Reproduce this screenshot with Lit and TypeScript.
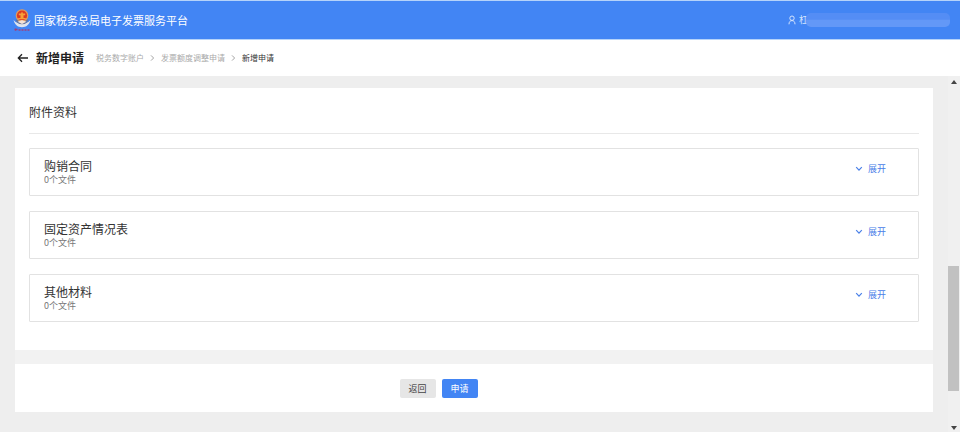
import { LitElement, html, css } from "lit";
import { customElement, property } from "lit/decorators.js";

const chevron = html`<svg viewBox="0 0 8 6" width="8" height="6" aria-hidden="true">
  <path d="M1.2 1.2 4 4.2 6.8 1.2" fill="none" stroke="currentColor" stroke-width="1.2" />
</svg>`;

const separator = html`<svg viewBox="0 0 5 8" width="5" height="8" aria-hidden="true">
  <path d="M1 1.4 3.6 4 1 6.6" fill="none" stroke="currentColor" stroke-width="0.9" />
</svg>`;

const emblem = html`<svg viewBox="0 0 18 24" width="18" height="24" aria-hidden="true">
  <path d="M.6 12c1 4.600 4 7.200 8.400 7.200s7.400-2.600 8.400-7.200c-2 2.500-4.900 3.800-8.400 3.800S2.600 14.500.6 12z" fill="#dfe4ee" />
  <path d="M2.500 11.500c.8 3.200 3 4.800 6.500 4.800s5.700-1.600 6.500-4.800z" fill="#66749c" />
  <circle cx="9" cy="7.500" r="6.300" fill="#e39a5a" />
  <circle cx="9" cy="7.500" r="5.100" fill="#dc3a22" />
  <path d="M9 3.500 10 5.500h2.200v1.800H10.500v2.700h2.300v1.300H5.200V10h2.300V7.300H5.800V5.500H8z" fill="#f6a13a" />
  <path d="M4.600 13.700 9 11.900l4.400 1.800-4.400 2.300z" fill="#f3e2d6" />
  <path d="M1.500 21.500h3M2.500 20.500v2.300M5.500 22h2M8.500 22h2M11.500 22h2M14.500 22h2" stroke="#a0407a" stroke-width="1.300" fill="none" />
</svg>`;

@customElement("attachment-card")
export class AttachmentCard extends LitElement {
  @property() name = "";
  @property({ type: Number }) count = 0;

  static styles = css`
    :host {
      display: flex;
      justify-content: space-between;
      align-items: flex-start;
      box-sizing: border-box;
      padding: 9px 32px 9px 14px;
      border: 1px solid #e2e2e2;
      border-radius: 1px;
    }
    .name {
      margin: 0;
      font-size: 12px;
      line-height: 16px;
      font-weight: 400;
      color: #333;
    }
    .count {
      margin: 0;
      font-size: 9px;
      line-height: 12px;
      color: #777;
    }
    .toggle {
      display: flex;
      align-items: center;
      gap: 5px;
      margin-top: 4px;
      padding: 0;
      border: 0;
      background: none;
      font: inherit;
      font-size: 9px;
      line-height: 14px;
      color: #4a80e8;
      cursor: pointer;
    }
  `;

  render() {
    return html`
      <div>
        <h3 class="name">${this.name}</h3>
        <p class="count">${this.count}个文件</p>
      </div>
      <button class="toggle" type="button" aria-expanded="false">${chevron}展开</button>
    `;
  }
}

@customElement("app-root")
export class AppRoot extends LitElement {
  static styles = css`
    :host {
      display: flex;
      flex-direction: column;
      min-height: 100vh;
      background: #eee;
      color: #333;
      font-family: "Noto Sans CJK SC", sans-serif;
    }
    .topbar {
      display: flex;
      align-items: center;
      box-sizing: border-box;
      height: 40px;
      padding: 0 10px 0 13px;
      border-top: 1px solid #b5d3fa;
      border-bottom: 1px solid #b5d3fa;
      background: #4285f4;
      color: #fff;
    }
    .brand {
      margin: 0 auto 0 3px;
      font-size: 11px;
      line-height: 16px;
      font-weight: 400;
    }
    .user {
      display: flex;
      align-items: center;
      gap: 3px;
      font-size: 9px;
      line-height: 14px;
      color: #d5e4fd;
    }
    .who {
      display: flex;
      align-items: center;
    }
    .mask {
      width: 144px;
      height: 14px;
      margin-left: -2px;
      border-radius: 5px;
      background: linear-gradient(#548df5 45%, #6398f7 50%);
    }
    .crumbbar {
      display: flex;
      align-items: center;
      height: 36px;
      padding-left: 17px;
      background: #fff;
    }
    .back {
      display: flex;
      padding: 0;
      border: 0;
      background: none;
      color: #222;
    }
    .title {
      margin: 0 12px 0 7px;
      font-size: 12px;
      line-height: 18px;
      font-weight: 700;
      color: #222;
    }
    .crumbs {
      display: flex;
      align-items: center;
      gap: 6px;
      font-size: 8px;
      line-height: 12px;
      color: #999;
    }
    .crumbs a {
      color: #aaa;
      text-decoration: none;
    }
    .current {
      color: #333;
    }
    .body {
      display: flex;
      flex: 1;
    }
    .content {
      flex: 1;
      padding: 12px 15px 20px;
    }
    .panel {
      padding: 14px 14px 28px;
      background: #fff;
    }
    .heading {
      margin: 0 0 14px;
      padding-bottom: 11px;
      border-bottom: 1px solid #e8e8e8;
      font-size: 12px;
      line-height: 20px;
      font-weight: 400;
    }
    .list {
      display: grid;
      gap: 15px;
    }
    .actions {
      display: flex;
      justify-content: center;
      gap: 6px;
      padding: 15px 71px 14px 0;
      border-top: 14px solid #f2f2f2;
      background: #fff;
    }
    .btn {
      width: 36px;
      padding: 0;
      border: 0;
      border-radius: 2px;
      background: #e6e6e6;
      color: #444;
      font: inherit;
      font-size: 9px;
      line-height: 19px;
    }
    .primary {
      background: #4285f4;
      color: #fff;
    }
    .scroll {
      display: flex;
      flex-direction: column;
      align-items: center;
      width: 12px;
      padding: 4px 0 2px;
      background: #f0f0f0;
      color: #444;
    }
    .track {
      display: grid;
      grid-template-rows: 182fr 125fr 35fr;
      flex: 1;
      width: 100%;
    }
    .thumb {
      grid-row: 2;
      margin-right: 1px;
      background: #c1c1c1;
    }
  `;

  private files = ["购销合同", "固定资产情况表", "其他材料"];

  render() {
    return html`
      <header class="topbar">
        ${emblem}
        <h1 class="brand">国家税务总局电子发票服务平台</h1>
        <div class="user">
          <svg viewBox="0 0 8 10" width="8" height="10" aria-hidden="true">
            <circle cx="4" cy="3.200" r="2.200" fill="none" stroke="currentColor" />
            <path d="M1 9.300C1 6.800 2.200 5.600 4 5.600s3 1.200 3 3.700" fill="none" stroke="currentColor" />
          </svg>
          <span class="who">杠<span class="mask"></span></span>
        </div>
      </header>
      <div class="crumbbar">
        <button class="back" type="button" aria-label="返回上一页">
          <svg viewBox="0 0 12 10" width="12" height="10">
            <path d="M11 5H1.500M5 1.200 1.300 5 5 8.800" fill="none" stroke="currentColor" stroke-width="1.300" />
          </svg>
        </button>
        <h2 class="title">新增申请</h2>
        <nav class="crumbs">
          <a href="#account">税务数字账户</a>${separator}<a href="#quota">发票额度调整申请</a>${separator}<span
            class="current" aria-current="page">新增申请</span>
        </nav>
      </div>
      <div class="body">
        <main class="content">
          <section class="panel">
            <h2 class="heading">附件资料</h2>
            <div class="list">
              ${this.files.map((f) => html`<attachment-card .name=${f}></attachment-card>`)}
            </div>
          </section>
          <div class="actions">
            <button class="btn" type="button">返回</button>
            <button class="btn primary" type="button">申请</button>
          </div>
        </main>
        <div class="scroll" aria-hidden="true">
          <svg viewBox="0 0 6 4" width="6" height="4"><path d="M0 4 3 0 6 4z" fill="currentColor" /></svg>
          <div class="track"><div class="thumb"></div></div>
          <svg viewBox="0 0 6 4" width="6" height="4"><path d="M0 0 3 4 6 0z" fill="currentColor" /></svg>
        </div>
      </div>
    `;
  }
}
